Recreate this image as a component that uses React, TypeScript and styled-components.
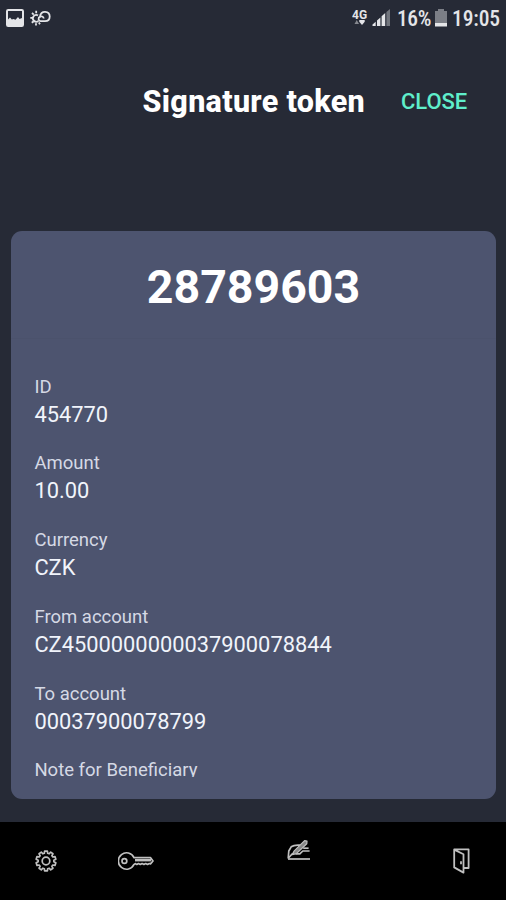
import React from 'react';
import styled, { createGlobalStyle } from 'styled-components';

const GlobalStyle = createGlobalStyle`
  * { box-sizing: border-box; }
  html, body { margin: 0; background: #262a36; }
  body { font-family: Roboto, sans-serif; }
`;

const Screen = styled.div`
  display: flex;
  flex-direction: column;
  width: 506px;
  height: 900px;
  overflow: hidden;
  background: #262a36;
`;

const StatusBar = styled.div`
  display: flex;
  align-items: center;
  height: 36px;
  padding: 0 6px 0 6px;
  color: #e4e5e8;
  svg { display: block; flex: none; }
`;

const StatusGroup = styled.div<{ $end?: boolean }>`
  display: flex;
  align-items: center;
  margin-left: ${(p) => (p.$end ? 'auto' : '0')};
`;

const StatusText = styled.span<{ $width: number; $left: number }>`
  width: ${(p) => p.$width}px;
  margin-left: ${(p) => p.$left}px;
  font-family: Roboto, sans-serif;
  font-stretch: condensed;
  font-weight: 500;
  font-size: 21.5px;
  letter-spacing: ${(p) => (p.$width > 40 ? -0.1 : -0.4)}px;
  line-height: 37px;
  white-space: nowrap;
`;

const StatusIconGap = styled.span<{ $size: number }>`
  width: ${(p) => p.$size}px;
`;

const Header = styled.header`
  display: flex;
  justify-content: flex-end;
  align-items: center;
  height: 130px;
  padding: 1px 39px 0 0;
  gap: 36px;
`;

const Title = styled.h1`
  margin: 0;
  font-size: 30.5px;
  font-weight: 800;
  letter-spacing: 0.3px;
  line-height: 36px;
  color: #fff;
  white-space: nowrap;
`;

const CloseButton = styled.button`
  padding: 0;
  border: 0;
  background: none;
  font-family: inherit;
  font-size: 22px;
  font-weight: 500;
  letter-spacing: -0.1px;
  line-height: 36px;
  color: #5feecb;
`;

const Card = styled.main`
  display: flex;
  flex-direction: column;
  height: 568px;
  margin: 65px 10px 23px 11px;
  border-radius: 11px;
  background: #4d546f;
`;

const Token = styled.div`
  height: 108px;
  padding-top: 28px;
  text-align: center;
  font-size: 46.5px;
  font-weight: 700;
  line-height: 56px;
  color: #fff;
  border-bottom: 1px solid #4b526c;
`;

const Details = styled.dl`
  height: 438px;
  margin: 0;
  padding: 34.8px 23.4px 0;
  overflow: hidden;
`;

const Field = styled.div`
  height: 76.7px;
`;

const Label = styled.dt`
  font-size: 18.5px;
  line-height: 26px;
  color: #d5d9e5;
`;

const Value = styled.dd`
  margin: 0;
  font-size: 21.85px;
  line-height: 29px;
  color: #f1f4fb;
`;

const BottomBar = styled.nav`
  display: flex;
  align-items: center;
  height: 78px;
  background: #000;
`;

const NavItem = styled.button<{ $left: number; $raise?: number }>`
  display: block;
  margin: 0 0 ${(p) => p.$raise ?? 0}px ${(p) => p.$left}px;
  padding: 0;
  border: 0;
  background: none;
  color: #c0c0c0;
  svg { display: block; }
`;

const PhotoIcon = () => (
  <svg width="18" height="18" viewBox="0 0 18 18">
    <rect x="1" y="1" width="16" height="16" rx="1.2" fill="none" stroke="currentColor" strokeWidth="2" />
    <path d="M2 10.5L4 8.5l1.8 2L7.5 10l2 .8L12 8l1.5 2L16 9V16H2Z" fill="currentColor" />
  </svg>
);

const WeatherIcon = () => (
  <svg width="21" height="18" viewBox="0 0 21 18" fill="none" stroke="currentColor" strokeWidth="1.8">
    <path d="M8.4 12A3.4 3.4 0 1 1 8 6.4" />
    <path d="M6.2 1.8v2.4M2 4l1.8 1.6M0.3 8.8h2.4M1.8 13.8l1.9-1.6M6 16.6v-2.4M10 15.2l-1.2-1.7" />
    <path d="M10.6 12.2a2.4 2.4 0 0 1-.5-4.6c0-3 2.4-5 5-4.8 2.7.2 4.6 2.2 4.6 4.7 0 2.8-1.9 4.7-4.7 4.7Z" />
    <path d="M9.5 7.7c2-.9 4-.2 4.2 1.8" />
  </svg>
);

const NetworkIcon = () => (
  <svg width="16" height="20" viewBox="0 0 16 20" fill="currentColor">
    <text x="0" y="10.5" fontFamily="Roboto, sans-serif" fontSize="12" fontWeight="700">4G</text>
    <path d="M2.5 16l2.2-4L7 16Z" opacity=".5" />
    <path d="M7.3 12h5.4v1.8L10 17l-2.7-3.2Z" />
  </svg>
);

const SignalIcon = () => (
  <svg width="19" height="18" viewBox="0 0 19 18" fill="currentColor">
    <path d="M0.5 17v-1.5l3.2-2.8V17ZM5 17v-5.5l3.4-3V17ZM9.6 17V7.2l3.6-3.2V17Z" />
    <path d="M14.4 17V2.9L18 0v17Z" opacity=".4" />
  </svg>
);

const BatteryIcon = () => (
  <svg width="12" height="18" viewBox="0 0 12 18" fill="currentColor">
    <path d="M0 2h3V0h6v2h3v12H0Z" opacity=".45" />
    <path d="M0 14h12v3.5H0Z" />
  </svg>
);

const teeth = 10;
const gearPath = Array.from({ length: teeth }, (_, i) => {
  const step = (Math.PI * 2) / teeth;
  const base = i * step - Math.PI / 2;
  return [
    [-0.34, 7.9],
    [-0.22, 10],
    [0.22, 10],
    [0.34, 7.9],
  ]
    .map(([turn, radius], j) => {
      const angle = base + turn * step;
      const x = 12 + Math.cos(angle) * radius;
      const y = 12 + Math.sin(angle) * radius;
      return `${i === 0 && j === 0 ? 'M' : 'L'}${x.toFixed(2)} ${y.toFixed(2)}`;
    })
    .join('');
}).join('') + 'Z';

const GearIcon = () => (
  <svg width="24" height="24" viewBox="0 0 24 24" fill="none" stroke="currentColor" strokeWidth="1.7" strokeLinejoin="round">
    <path d={gearPath} />
    <circle cx="12" cy="12" r="3.8" />
  </svg>
);

const KeyIcon = () => (
  <svg width="36" height="22" viewBox="0 0 36 22" fill="none" stroke="currentColor" strokeWidth="1.7" strokeLinejoin="round">
    <path d="M16 7.6A8.2 8.2 0 1 0 16 14.4L17.5 13.6l1.3.9 1.7-1 1.8 1 1.8-1 1.8 1 1.8-1 1.8 1 1.8-1 1.2.4L35 11l-2.6-3.4Z" />
    <circle cx="6.4" cy="11" r="2.4" />
    <path d="M17 10.2h16" strokeWidth="2.4" />
  </svg>
);

const SignIcon = () => (
  <svg width="24" height="22" viewBox="0 0 24 22" fill="none" stroke="currentColor" strokeWidth="1.7" strokeLinejoin="round">
    <path d="M1 20h22" />
    <path d="M1.2 19.5l.6-7.5 2.4-4.2C6.4 6.2 9.5 5.9 13 6.2" />
    <path d="M1.6 18.8l4.2-4.6M8.6 14.9h4.2l3-2.9h6.8" />
    <path d="M5.4 15.6L7 12.2 17.6 1.6l2.4.6-.2 2.6L9.4 14.6Z" fill="currentColor" fillOpacity=".7" strokeWidth="1.2" />
    <path d="M16.2 9.2h5.4" />
  </svg>
);

const DoorIcon = () => (
  <svg width="17" height="26" viewBox="0 0 17 26" fill="none" stroke="currentColor" strokeWidth="1.8" strokeLinejoin="round">
    <path d="M10.5 20H15.6V1.4H1.2V19.4L10.5 24.6V6.2L1.2 1.6" />
    <path d="M8 13.2v3" />
  </svg>
);

const fields = [
  { label: 'ID', value: '454770' },
  { label: 'Amount', value: '10.00' },
  { label: 'Currency', value: 'CZK' },
  { label: 'From account', value: 'CZ4500000000037900078844' },
  { label: 'To account', value: '00037900078799' },
  { label: 'Note for Beneficiary' },
];

export default function App() {
  return (
    <>
      <GlobalStyle />
      <Screen>
        <StatusBar>
          <StatusGroup>
            <PhotoIcon />
            <StatusIconGap $size={6} />
            <WeatherIcon />
          </StatusGroup>
          <StatusGroup $end>
            <NetworkIcon />
            <StatusIconGap $size={4} />
            <SignalIcon />
            <StatusText $width={34} $left={6}>16%</StatusText>
            <StatusIconGap $size={4} />
            <BatteryIcon />
            <StatusText $width={48} $left={5}>19:05</StatusText>
          </StatusGroup>
        </StatusBar>
        <Header>
          <Title>Signature token</Title>
          <CloseButton>CLOSE</CloseButton>
        </Header>
        <Card>
          <Token>28789603</Token>
          <Details>
            {fields.map((field) => (
              <Field key={field.label}>
                <Label>{field.label}</Label>
                {field.value && <Value>{field.value}</Value>}
              </Field>
            ))}
          </Details>
        </Card>
        <BottomBar>
          <NavItem $left={33.5} aria-label="Settings"><GearIcon /></NavItem>
          <NavItem $left={60} aria-label="Keys"><KeyIcon /></NavItem>
          <NavItem $left={133} $raise={22} aria-label="Sign"><SignIcon /></NavItem>
          <NavItem $left={142} aria-label="Log out"><DoorIcon /></NavItem>
        </BottomBar>
      </Screen>
    </>
  );
}
